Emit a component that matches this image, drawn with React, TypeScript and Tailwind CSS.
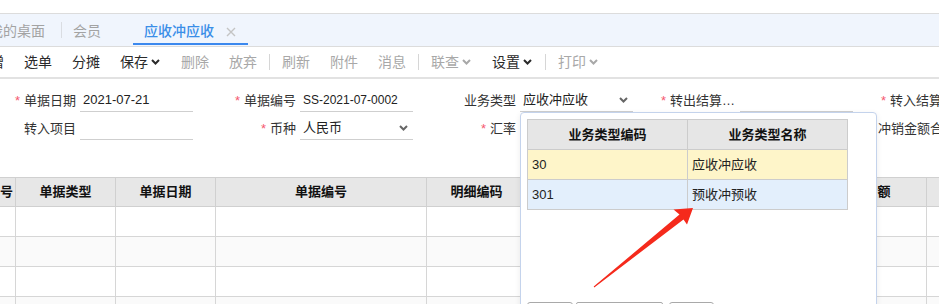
import React from "react";

// ── Helpers ───────────────────────────────────────────────────────────────────

function Chevron({ className = "" }: { className?: string }) {
  return (
    <svg width="9" height="6" viewBox="0 0 9 6" className={className}>
      <polyline points="1,1 4.5,4.5 8,1" fill="none" stroke="currentColor" strokeWidth="2" />
    </svg>
  );
}

function Star() {
  return <span className="mr-[4px] text-[13px] text-[#f5586f]">*</span>;
}

// ── Tabs ─────────────────────────────────────────────────────────────────────

function TabBar() {
  return (
    <div className="flex h-[34px] items-stretch border-y border-[#dcdcdc] bg-[#f0f5fd] text-[14px]">
      <div className="ml-[-11px] flex items-center pr-[16px] pt-[3px] text-[#a3a3a3]">我的桌面</div>
      <div className="h-[16px] w-px self-center bg-[#dadde2]" />
      <div className="flex items-center pl-[11px] pr-[33px] pt-[3px] text-[#a3a3a3]">会员</div>
      <div className="relative ml-[-1px] flex items-center pl-[11px] pr-[12px] pt-[3px]">
        <span className="font-medium text-[#3a8ee8]">应收冲应收</span>
        <svg width="10" height="10" viewBox="0 0 10 10" className="ml-[12px]">
          <path d="M1 1 L9 9 M9 1 L1 9" stroke="#c4c4c4" strokeWidth="1.4" />
        </svg>
        <div className="absolute bottom-[1px] left-0 right-0 h-[2px] bg-[#3b88ee]" />
      </div>
    </div>
  );
}

// ── Toolbar ──────────────────────────────────────────────────────────────────

type Tool = { t: string; on?: boolean; dd?: boolean } | "|";

const tools: Tool[] = [
  { t: "新增", on: true },
  { t: "选单", on: true },
  { t: "分摊", on: true },
  { t: "保存", on: true, dd: true },
  { t: "删除" },
  { t: "放弃" },
  "|",
  { t: "刷新" },
  { t: "附件" },
  { t: "消息" },
  "|",
  { t: "联查", dd: true },
  { t: "设置", on: true, dd: true },
  "|",
  { t: "打印", dd: true },
];

function Toolbar() {
  return (
    <div className="flex h-[32px] items-center gap-[20px] border-b-2 border-[#e2e2e2] pl-0 text-[14px]">
      <div className="ml-[-44px]" />
      {tools.map((tool, i) =>
        tool === "|" ? (
          <div key={i} className="mx-[-8px] h-[16px] w-px bg-[#d6d6d6]" />
        ) : (
          <div
            key={i}
            className={`flex items-center ${tool.on ? "text-[#2a2a2a]" : "text-[#a8a8a8]"}`}
          >
            {tool.t}
            {tool.dd && <Chevron className="ml-[3px] mr-[1px]" />}
          </div>
        ),
      )}
    </div>
  );
}

// ── Form ─────────────────────────────────────────────────────────────────────

function Field({
  label,
  req,
  value,
  dd,
  small,
  truncate,
}: {
  label: string;
  req?: boolean;
  value?: string;
  dd?: boolean;
  small?: boolean;
  truncate?: boolean;
}) {
  return (
    <div className="flex h-[23px] w-[220px] shrink-0 items-center">
      <div className="flex w-[80px] shrink-0 items-center justify-end whitespace-nowrap pr-[4px] text-[13px] text-[#333]">
        {req && <Star />}
        <span className={truncate ? "block w-[66px] shrink-0 truncate" : "shrink-0"}>{label}</span>
      </div>
      <div className="flex h-[23px] w-[113px] items-center justify-between border-b border-[#cfcfcf] pl-[3px] pr-[5px]">
        <span className={`${small ? "text-[12px]" : "text-[13px]"} text-[#222]`}>{value}</span>
        {dd && <Chevron className="text-[#666]" />}
      </div>
    </div>
  );
}

function Form() {
  return (
    <div className="flex h-[98px] flex-col gap-[5px] pt-[10px]">
      <div className="flex">
        <Field label="单据日期" req value="2021-07-21" />
        <Field label="单据编号" req value="SS-2021-07-0002" small />
        <Field label="业务类型" value="应收冲应收" dd />
        <Field label="转出结算方式" req truncate />
        <Field label="转入结算方式" req truncate />
      </div>
      <div className="flex">
        <Field label="转入项目" />
        <Field label="币种" req value="人民币" dd />
        <Field label="汇率" req />
        <Field label="转出项目" />
        <Field label="冲销金额合计" />
      </div>
    </div>
  );
}

// ── Grid ─────────────────────────────────────────────────────────────────────

const cols = [
  { t: "序号", w: "w-[16px]" },
  { t: "单据类型", w: "w-[100px]" },
  { t: "单据日期", w: "w-[100px]" },
  { t: "单据编号", w: "w-[211px]" },
  { t: "明细编码", w: "w-[100px]" },
  { t: "明细名称", w: "w-[140px]" },
  { t: "未核金额", w: "w-[136px]" },
  { t: "核销金额", w: "w-[124px]" },
  { t: "备注", w: "w-[120px]" },
];

function Grid() {
  return (
    <div className="border-t border-[#d0d0d0]">
      <div className="flex h-[29px] border-b border-[#d0d0d0] bg-[#e7e7e7] text-[13px] font-bold text-[#111]">
        {cols.map((c, i) => (
          <div
            key={i}
            className={`${c.w} flex shrink-0 items-center overflow-hidden whitespace-nowrap border-r border-[#d0d0d0] ${
              i === 0 ? "justify-end pr-[2px]" : "justify-center"
            }`}
          >
            {c.t}
          </div>
        ))}
      </div>
      {[0, 1, 2, 3].map((r) => (
        <div
          key={r}
          className={`flex h-[30px] border-b border-[#d6d6d6] ${r % 2 ? "bg-[#fafafa]" : "bg-white"}`}
        >
          {cols.map((c, i) => (
            <div key={i} className={`${c.w} shrink-0 border-r border-[#d6d6d6]`} />
          ))}
        </div>
      ))}
    </div>
  );
}

// ── Dropdown popup ───────────────────────────────────────────────────────────

function TypePopup() {
  return (
    <div className="absolute left-[520px] top-[112px] flex h-[220px] w-[357px] flex-col rounded-[4px] border border-[#c4d3ec] bg-white pl-[6px] pt-[6px] shadow-[0_2px_6px_rgba(0,0,0,0.08)]">
      <div className="w-[321px] border-l border-t border-[#cccccc] text-[13px]">
        <div className="flex h-[30px] bg-[#e6e6e6] font-bold text-[#111]">
          <div className="flex w-[160px] items-center justify-center border-b border-r border-[#cccccc]">业务类型编码</div>
          <div className="flex w-[160px] items-center justify-center border-b border-r border-[#cccccc]">业务类型名称</div>
        </div>
        <div className="flex h-[30px] bg-[#fef5c9] text-[#222]">
          <div className="flex w-[160px] items-center border-b border-r border-[#cccccc] pl-[4px]">30</div>
          <div className="flex w-[160px] items-center border-b border-r border-[#cccccc] pl-[4px]">应收冲应收</div>
        </div>
        <div className="flex h-[30px] bg-[#e3effc] text-[#222]">
          <div className="flex w-[160px] items-center border-b border-r border-[#cccccc] pl-[4px]">301</div>
          <div className="flex w-[160px] items-center border-b border-r border-[#cccccc] pl-[4px]">预收冲预收</div>
        </div>
      </div>
      <div className="mt-[92px] flex">
        <div className="h-[24px] w-[46px] rounded-[3px] border border-[#a9a9a9]" />
        <div className="ml-[3px] h-[24px] w-[87px] rounded-[2px] border border-[#a9a9a9]" />
        <div className="ml-[6px] h-[24px] w-[45px] rounded-[3px] border border-[#a9a9a9]" />
      </div>
    </div>
  );
}

function RedArrow() {
  return (
    <svg width="939" height="304" className="pointer-events-none absolute left-0 top-0">
      <polygon
        points="594.3,287.4 683.5,219.5 687,224.5 693,208 673.5,209.5 679.5,214.5 593.7,286.6"
        fill="#f52a1c"
      />
    </svg>
  );
}

// ── Main ─────────────────────────────────────────────────────────────────────

export default function App() {
  return (
    <div
      className="relative h-[304px] w-[939px] overflow-hidden bg-white"
      style={{ fontFamily: '"Liberation Sans", "Noto Sans CJK SC", sans-serif' }}
    >
      <div className="h-[13px]" />
      <TabBar />
      <Toolbar />
      <Form />
      <Grid />
      <TypePopup />
      <RedArrow />
    </div>
  );
}
